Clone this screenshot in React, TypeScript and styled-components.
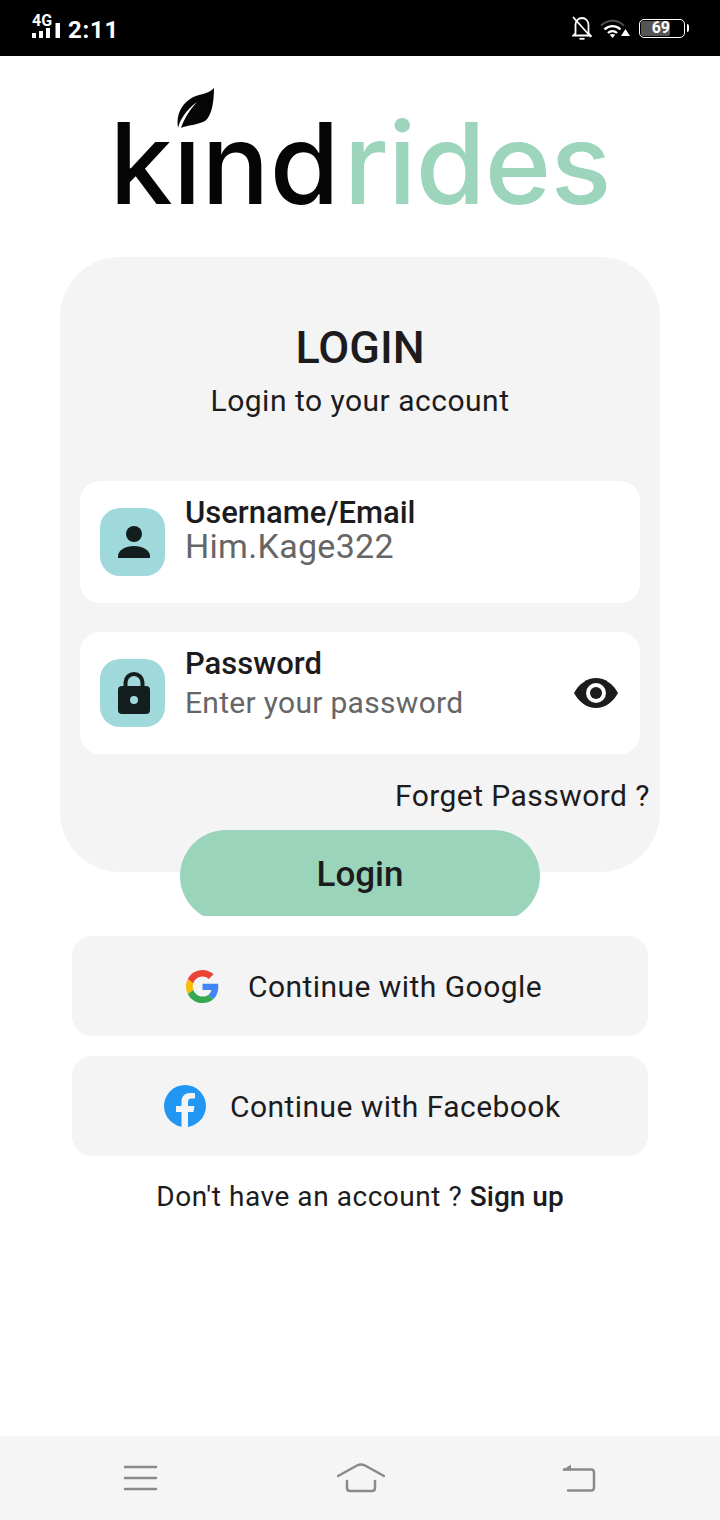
import styled, { createGlobalStyle } from "styled-components";

const GlobalStyle = createGlobalStyle`
  html, body { margin: 0; padding: 0; background: #ffffff; }
  body { font-family: Roboto, "Liberation Sans", sans-serif; color: #1c1c1e; }
  * { box-sizing: border-box; }
`;

const Screen = styled.div`
  width: 720px;
  height: 1520px;
  display: flex;
  flex-direction: column;
  overflow: hidden;
`;

const StatusBar = styled.div`
  height: 56px;
  flex-shrink: 0;
  background: #000000;
  color: #ffffff;
  display: flex;
  align-items: center;
  justify-content: space-between;
  padding: 0 35px 0 32px;
`;

const StatusLeft = styled.div`
  display: flex;
  align-items: center;
  gap: 8px;
`;

const SignalBox = styled.div`
  width: 28px;
  margin-bottom: 3px;
  display: flex;
  flex-direction: column;
  align-items: flex-start;
`;

const NetworkLabel = styled.span`
  font-size: 16px;
  line-height: 12px;
  font-weight: 700;
  margin-bottom: -4px;
`;

const Clock = styled.span`
  font-size: 24px;
  line-height: 28px;
  font-weight: 700;
  letter-spacing: 0.7px;
  margin-top: 3px;
`;

const StatusRight = styled.div`
  display: flex;
  align-items: center;
  gap: 8px;
`;

const Battery = styled.div`
  width: 46px;
  height: 19px;
  margin-left: 1px;
  border: 1.5px solid #ffffff;
  border-radius: 5px;
  padding: 1px;
  display: flex;
  position: relative;

  &::after {
    content: "";
    position: absolute;
    right: -5px;
    top: 4px;
    width: 2px;
    height: 8px;
    border-radius: 0 2px 2px 0;
    background: #ffffff;
  }
`;

const BatteryFill = styled.div`
  width: 29px;
  background: #555555;
  border-radius: 2px;
  font-size: 16px;
  line-height: 14px;
  font-weight: 700;
  text-align: right;
  white-space: nowrap;
`;

const LogoArea = styled.div`
  height: 201px;
  flex-shrink: 0;
  position: relative;
  display: flex;
  justify-content: center;
  padding-top: 39px;
`;

const LogoText = styled.div`
  font-family: Inter, sans-serif;
  font-size: 113px;
  line-height: 136px;
  font-weight: 500;
  letter-spacing: 0.2px;
  color: #050505;
`;

const LogoAccent = styled.span`
  color: #9cd5bc;
  margin-left: 4px;
  letter-spacing: -0.8px;
`;

const Leaf = styled.svg`
  position: absolute;
  left: 176px;
  top: 31px;
`;

const Card = styled.div`
  width: 600px;
  height: 615px;
  margin: 0 auto;
  flex-shrink: 0;
  background: #f4f4f4;
  border-radius: 60px;
  padding: 64px 20px 0;
  display: flex;
  flex-direction: column;
`;

const Title = styled.h1`
  margin: 0;
  font-size: 45px;
  line-height: 54px;
  font-weight: 500;
  text-align: center;
  color: #1c1c1e;
`;

const Subtitle = styled.p`
  margin: 6px 0 60px;
  font-size: 30px;
  line-height: 40px;
  letter-spacing: 0.5px;
  text-align: center;
  color: #1c1c1e;
`;

const Field = styled.div`
  height: 122px;
  background: #ffffff;
  border-radius: 20px;
  display: flex;
  align-items: center;
  padding: 0 22px 0 20px;
  margin-bottom: 29px;
`;

const IconTile = styled.div`
  width: 65px;
  height: 68px;
  margin-right: 20px;
  padding-left: 3px;
  flex-shrink: 0;
  border-radius: 20px;
  background: #9fd9dc;
  display: flex;
  align-items: center;
  justify-content: center;
`;

const FieldBody = styled.div`
  flex: 1;
  align-self: flex-start;
  padding-top: 15px;
  display: flex;
  flex-direction: column;
`;

const FieldLabel = styled.span`
  font-size: 31px;
  line-height: 34px;
  font-weight: 500;
  color: #1c1c1e;
`;

const FieldValue = styled.span<{ $large?: boolean }>`
  font-size: ${(p) => (p.$large ? 34 : 30)}px;
  line-height: ${(p) => (p.$large ? 33 : 44)}px;
  letter-spacing: 0.3px;
  color: #666666;
`;

const ForgotLink = styled.div`
  margin: -7px -10px 0 0;
  text-align: right;
  font-size: 30px;
  line-height: 40px;
  letter-spacing: 0.45px;
  color: #1c1c1e;
`;

const LoginClip = styled.div`
  width: 360px;
  height: 86px;
  flex-shrink: 0;
  margin: -42px auto 0;
  overflow: hidden;
`;

const LoginButton = styled.button`
  width: 360px;
  height: 92px;
  display: block;
  border: 0;
  padding: 0 0 4px;
  border-radius: 46px;
  background: #9ad4bb;
  color: #1c1c1e;
  font-family: Roboto, sans-serif;
  font-size: 35px;
  font-weight: 500;
`;

const SocialList = styled.div`
  display: flex;
  flex-direction: column;
  gap: 20px;
  padding: 20px 72px 0;
`;

const SocialButton = styled.div<{ $inset: number; $gap: number }>`
  height: 100px;
  background: #f4f4f4;
  border-radius: 20px;
  display: flex;
  align-items: center;
  padding-left: ${(p) => p.$inset}px;
  gap: ${(p) => p.$gap}px;
  font-size: 30px;
  letter-spacing: 0.45px;
  color: #1c1c1e;
`;

const SignupLine = styled.div`
  margin-top: 20px;
  text-align: center;
  font-size: 28px;
  line-height: 42px;
  letter-spacing: 0.55px;
  color: #1c1c1e;
`;

const SignupLink = styled.span`
  font-weight: 500;
  letter-spacing: 0;
`;

const NavBar = styled.div`
  margin-top: auto;
  height: 84px;
  flex-shrink: 0;
  background: #f5f5f5;
  display: flex;
  align-items: center;
  justify-content: space-between;
  padding: 0 124px 0 123px;
`;

function BellOffIcon() {
  return (
    <svg width="20" height="24" viewBox="0 0 20 24" fill="none" stroke="#fff" strokeWidth="1.800">
      <path d="M3.500 17.500V9c0-4 2.800-7 6.500-7s6.500 3 6.500 7v8.500l2 2H1.500z" />
      <path d="M7.500 22.800h5" />
      <path d="M1 1l18 20" />
    </svg>
  );
}

function WifiIcon() {
  return (
    <svg width="30" height="19" viewBox="0 0 30 19" fill="none">
      <path d="M1 6.500c6.500-6.500 16.500-6.500 23 0" stroke="#4a4a4a" strokeWidth="2" />
      <path d="M4.500 10.500c4.500-4.500 11.500-4.500 16 0" stroke="#fff" strokeWidth="2.300" />
      <path d="M8 14c2.500-2.500 6.500-2.500 9 0" stroke="#fff" strokeWidth="2.300" />
      <path d="M9.800 15.800L12.500 19l2.700-3.200c-1.500-1.200-3.900-1.200-5.400 0z" fill="#fff" />
      <path d="M25.500 10l4.500 7h-9z" fill="#fff" />
    </svg>
  );
}

function SignalIcon() {
  return (
    <svg width="28" height="15" viewBox="0 0 28 15" fill="#fff">
      <rect x="0" y="10" width="4" height="5" />
      <rect x="7" y="8" width="4" height="7" />
      <rect x="14" y="5" width="4" height="10" />
      <rect x="23.500" y="0" width="4.500" height="15" />
    </svg>
  );
}

function UserIcon() {
  return (
    <svg width="32" height="32" viewBox="0 0 32 32" fill="#141e1f">
      <circle cx="16" cy="8" r="8" />
      <path d="M0 32v-2c0-6 8-10 16-10s16 4 16 10v2z" />
    </svg>
  );
}

function LockIcon() {
  return (
    <svg width="32" height="42" viewBox="0 0 32 42">
      <path d="M7.500 16V10.500a8.500 8.500 0 0 1 17 0V16" fill="none" stroke="#141e1f" strokeWidth="4" />
      <rect x="0" y="14" width="32" height="28" rx="4" fill="#141e1f" />
      <circle cx="16" cy="28" r="4" fill="#9fd9dc" />
    </svg>
  );
}

function EyeIcon() {
  return (
    <svg width="44" height="30" viewBox="0 0 44 30">
      <path d="M0 15C5 6 13 0 22 0s17 6 22 15c-5 9-13 15-22 15S5 24 0 15z" fill="#1c1c1e" />
      <circle cx="22" cy="15" r="10" fill="#fff" />
      <circle cx="22" cy="15" r="6" fill="#1c1c1e" />
    </svg>
  );
}

function GoogleIcon() {
  return (
    <svg width="33" height="33" viewBox="0 0 48 48">
      <path fill="#4285f4" d="M46.980 24.550c0-1.570-.150-3.090-.380-4.550H24v9.020h12.940c-.580 2.960-2.260 5.480-4.780 7.180l7.730 6c4.510-4.180 7.090-10.360 7.090-17.650z" />
      <path fill="#34a853" d="M24 48c6.480 0 11.930-2.130 15.890-5.810l-7.730-6c-2.150 1.450-4.920 2.300-8.160 2.300-6.260 0-11.570-4.220-13.470-9.910l-7.980 6.190C6.510 42.620 14.620 48 24 48z" />
      <path fill="#fbbc05" d="M10.530 28.590c-.480-1.450-.760-2.990-.760-4.590s.270-3.140.760-4.590l-7.980-6.190C.920 16.460 0 20.120 0 24s.920 7.540 2.560 10.780l7.970-6.190z" />
      <path fill="#ea4335" d="M24 9.500c3.540 0 6.710 1.220 9.210 3.600l6.850-6.850C35.900 2.380 30.470 0 24 0 14.620 0 6.510 5.380 2.560 13.220l7.980 6.190C12.430 13.720 17.740 9.500 24 9.500z" />
    </svg>
  );
}

function FacebookIcon() {
  return (
    <svg width="42" height="42" viewBox="0 0 42 42">
      <circle cx="21" cy="21" r="21" fill="#2196f3" />
      <path d="M24 42V27h5.500l1-6H24v-4c0-2 1-3.500 3.500-3.500H31V8.300C29.500 8 28 8 26.500 8 21 8 17.500 11.300 17.500 16.500V21H12v6h5.500v15z" fill="#f4f4f4" />
    </svg>
  );
}

function MenuIcon() {
  return (
    <svg width="36" height="26" viewBox="0 0 36 26" stroke="#8a8a8a" strokeWidth="2.500" strokeLinecap="round">
      <path d="M2 2h31M2 13h31M2 24h31" />
    </svg>
  );
}

function HomeIcon() {
  return (
    <svg width="48" height="30" viewBox="0 0 48 30" fill="none" stroke="#8a8a8a" strokeWidth="2.500" strokeLinecap="round">
      <path d="M1 13L20 2.500c2.500-1.300 5.500-1.300 8 0L47 13" />
      <path d="M10 18v7c0 2 1 3 3 3h22c2 0 3-1 3-3v-7" />
    </svg>
  );
}

function BackIcon() {
  return (
    <svg width="34" height="30" viewBox="0 0 34 30">
      <path d="M2 6.500h27c1.500 0 3 1 3 3v15c0 2-1.500 3-3 3H6" fill="none" stroke="#8a8a8a" strokeWidth="2.500" strokeLinecap="round" />
      <path d="M0 7.500L9 1.500v6z" fill="#8a8a8a" />
    </svg>
  );
}

export default function App() {
  return (
    <Screen>
      <GlobalStyle />
      <StatusBar>
        <StatusLeft>
          <SignalBox>
            <NetworkLabel>4G</NetworkLabel>
            <SignalIcon />
          </SignalBox>
          <Clock>2:11</Clock>
        </StatusLeft>
        <StatusRight>
          <BellOffIcon />
          <WifiIcon />
          <Battery>
            <BatteryFill>69</BatteryFill>
          </Battery>
        </StatusRight>
      </StatusBar>

      <LogoArea>
        <Leaf width="40" height="44" viewBox="0 0 40 44">
          <path d="M38 1c-6 7-15 5-24 11C5 18 0 28 2 41c2-8 7-17 19-26C13 24 8 32 5 41c6-3 17-3 24-7 7-5 9-20 9-33z" fill="#050505" />
        </Leaf>
        <LogoText>
          kınd<LogoAccent>rides</LogoAccent>
        </LogoText>
      </LogoArea>

      <Card>
        <Title>LOGIN</Title>
        <Subtitle>Login to your account</Subtitle>
        <Field>
          <IconTile>
            <UserIcon />
          </IconTile>
          <FieldBody>
            <FieldLabel>Username/Email</FieldLabel>
            <FieldValue $large>Him.Kage322</FieldValue>
          </FieldBody>
        </Field>
        <Field>
          <IconTile>
            <LockIcon />
          </IconTile>
          <FieldBody>
            <FieldLabel>Password</FieldLabel>
            <FieldValue>Enter your password</FieldValue>
          </FieldBody>
          <EyeIcon />
        </Field>
        <ForgotLink>Forget Password ?</ForgotLink>
      </Card>
      <LoginClip>
        <LoginButton>Login</LoginButton>
      </LoginClip>

      <SocialList>
        <SocialButton $inset={114} $gap={29}>
          <GoogleIcon />
          Continue with Google
        </SocialButton>
        <SocialButton $inset={92} $gap={24}>
          <FacebookIcon />
          Continue with Facebook
        </SocialButton>
      </SocialList>
      <SignupLine>
        Don't have an account ? <SignupLink>Sign up</SignupLink>
      </SignupLine>

      <NavBar>
        <MenuIcon />
        <HomeIcon />
        <BackIcon />
      </NavBar>
    </Screen>
  );
}
